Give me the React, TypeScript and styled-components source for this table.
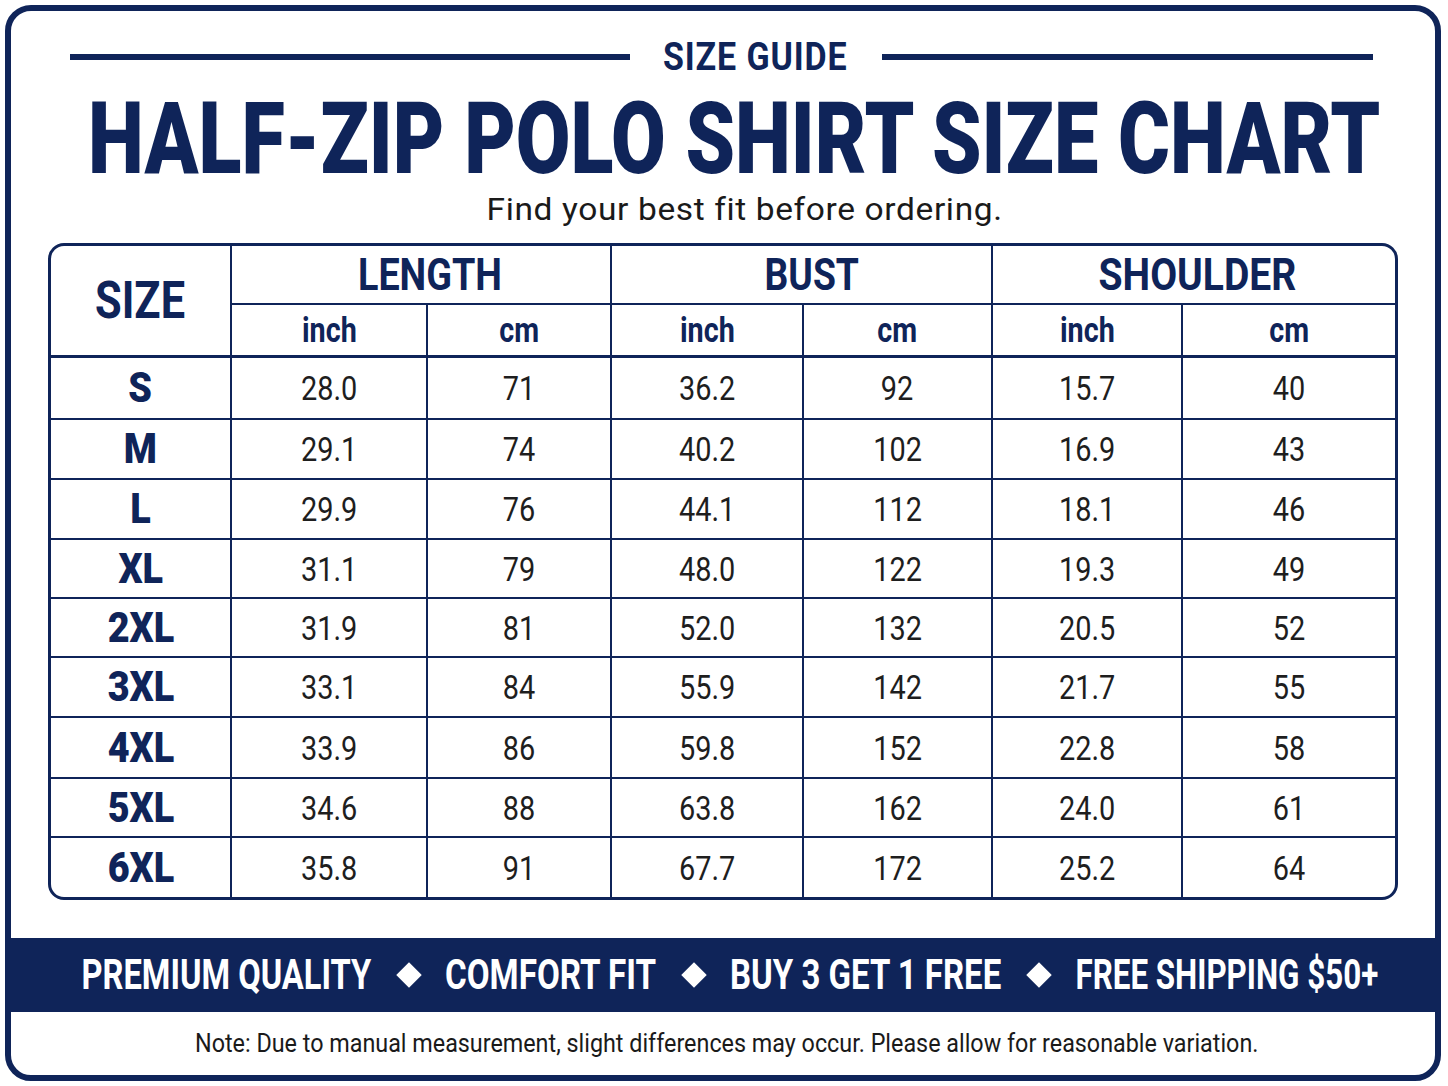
import React, { useLayoutEffect, useRef, useState } from 'react'
import styled, { createGlobalStyle } from 'styled-components'

const NAVY = '#0f2459'
const SANS = 'Roboto, "Liberation Sans", sans-serif'

const GlobalStyle = createGlobalStyle`
  html, body {
    margin: 0;
    padding: 0;
    background: #ffffff;
  }
  body {
    font-family: ${SANS};
  }
`

// squeezes a line of text horizontally so it fills exactly `w` pixels
const FitOuter = styled.span<{ $w: number }>`
  display: inline-flex;
  justify-content: center;
  width: ${(p) => p.$w}px;
  flex-shrink: 0;
  white-space: nowrap;
`

const FitInner = styled.span`
  display: inline-block;
  flex-shrink: 0;
  white-space: nowrap;
  transform-origin: center;
`

const Fit = ({ w, children }: { w: number; children: React.ReactNode }) => {
  const ref = useRef<HTMLSpanElement>(null)
  const [scale, setScale] = useState(1)
  useLayoutEffect(() => {
    const measure = () => {
      if (ref.current && ref.current.offsetWidth) setScale(w / ref.current.offsetWidth)
    }
    measure()
    document.fonts?.ready.then(measure)
  }, [w])
  return (
    <FitOuter $w={w}>
      <FitInner ref={ref} style={{ transform: `scaleX(${scale})` }}>
        {children}
      </FitInner>
    </FitOuter>
  )
}

const Page = styled.div`
  padding: 5px;
  width: 1448px;
  box-sizing: border-box;
`

const Frame = styled.div`
  width: 1436px;
  height: 1076px;
  box-sizing: border-box;
  border: 6px solid ${NAVY};
  border-radius: 26px;
  overflow: hidden;
  display: flex;
  flex-direction: column;
  align-items: center;
  background: #fff;
`

const GuideRow = styled.div`
  margin-top: 26px;
  height: 40px;
  width: 100%;
  display: flex;
  align-items: center;
  padding-left: 59px;
  box-sizing: border-box;
`

const Rule = styled.div<{ $w: number }>`
  width: ${(p) => p.$w}px;
  height: 6px;
  flex-shrink: 0;
  background: ${NAVY};
`

const Guide = styled.div`
  margin: 0 34px 0 33px;
  font-weight: 700;
  font-size: 38px;
  line-height: 40px;
  letter-spacing: 1px;
  color: ${NAVY};
`

const Title = styled.h1`
  margin: 20px 0 0 22px;
  font-weight: 900;
  font-size: 101px;
  line-height: 84px;
  color: ${NAVY};
`

const Subtitle = styled.p`
  margin: 10px 0 0 44px;
  font-size: 32px;
  line-height: 36px;
  letter-spacing: 0.6px;
  color: #1a1a1a;
`

const Table = styled.div`
  margin-top: 16px;
  width: 1350px;
  box-sizing: border-box;
  border: 3px solid ${NAVY};
  border-radius: 16px;
  overflow: hidden;
  display: grid;
  grid-template-columns: 181px 196px 184px 192px 189px 190px 1fr;
  grid-template-rows: 59px 53px 62px 60px 60px 59px 59px 60px 61px 59px 59px;
`

const Cell = styled.div<{ $last?: boolean; $bottom?: number; $col?: string; $row?: string; $shift?: number }>`
  box-sizing: border-box;
  display: flex;
  align-items: center;
  justify-content: center;
  padding-left: ${(p) => p.$shift ?? 0}px;
  border-right: ${(p) => (p.$last ? 'none' : `2px solid ${NAVY}`)};
  border-bottom: ${(p) => (p.$bottom === 0 ? 'none' : `${p.$bottom ?? 2}px solid ${NAVY}`)};
  grid-column: ${(p) => p.$col ?? 'auto'};
  grid-row: ${(p) => p.$row ?? 'auto'};
`

const HeadText = styled.span<{ $size: number }>`
  font-weight: 700;
  font-size: ${(p) => p.$size}px;
  line-height: 1;
  color: ${NAVY};
`

const UnitText = styled.span`
  display: inline-block;
  font-weight: 700;
  font-size: 35px;
  line-height: 1;
  color: ${NAVY};
  transform: scaleX(0.82);
`

const SizeText = styled.span`
  display: inline-block;
  font-weight: 900;
  font-size: 42px;
  line-height: 1;
  color: ${NAVY};
  transform: scaleX(0.9);
`

const Value = styled.span`
  display: inline-block;
  font-weight: 400;
  font-size: 34px;
  line-height: 1;
  color: #1e1e1e;
  transform: scaleX(0.85);
`

const Banner = styled.div`
  margin-top: 38px;
  width: 100%;
  height: 74px;
  flex-shrink: 0;
  background: ${NAVY};
  display: flex;
  align-items: center;
  justify-content: center;
  gap: 25px;
  padding-left: 14px;
  box-sizing: border-box;
`

const Perk = styled.span`
  font-weight: 700;
  font-size: 42px;
  line-height: 1;
  color: #ffffff;
`

const Diamond = styled.span`
  width: 18px;
  height: 18px;
  margin: 0 3px;
  flex-shrink: 0;
  background: #ffffff;
  transform: rotate(45deg);
`

const Note = styled.div`
  flex: 1;
  display: flex;
  align-items: center;
  justify-content: center;
  font-size: 25px;
  color: #1a1a1a;
  padding-left: 7px;
`

const rows: string[][] = [
  ['S', '28.0', '71', '36.2', '92', '15.7', '40'],
  ['M', '29.1', '74', '40.2', '102', '16.9', '43'],
  ['L', '29.9', '76', '44.1', '112', '18.1', '46'],
  ['XL', '31.1', '79', '48.0', '122', '19.3', '49'],
  ['2XL', '31.9', '81', '52.0', '132', '20.5', '52'],
  ['3XL', '33.1', '84', '55.9', '142', '21.7', '55'],
  ['4XL', '33.9', '86', '59.8', '152', '22.8', '58'],
  ['5XL', '34.6', '88', '63.8', '162', '24.0', '61'],
  ['6XL', '35.8', '91', '67.7', '172', '25.2', '64'],
]

const groups = [
  { label: 'LENGTH', col: '2 / span 2', w: 144, shift: 18 },
  { label: 'BUST', col: '4 / span 2', w: 94, shift: 20 },
  { label: 'SHOULDER', col: '6 / span 2', w: 198, shift: 6 },
]

const perks = [
  { text: 'PREMIUM QUALITY', w: 290 },
  { text: 'COMFORT FIT', w: 211 },
  { text: 'BUY 3 GET 1 FREE', w: 271 },
  { text: 'FREE SHIPPING $50+', w: 303 },
]

const App = (): JSX.Element => {
  return (
    <Page>
      <GlobalStyle />
      <Frame>
        <GuideRow>
          <Rule $w={560} />
          <Guide>
            <Fit w={185}>SIZE GUIDE</Fit>
          </Guide>
          <Rule $w={491} />
        </GuideRow>
        <Title>
          <Fit w={1292}>HALF-ZIP POLO SHIRT SIZE CHART</Fit>
        </Title>
        <Subtitle>
          <Fit w={516}>Find your best fit before ordering.</Fit>
        </Subtitle>

        <Table>
          <Cell $col="1" $row="1 / span 2" $bottom={3}>
            <HeadText $size={52}>
              <Fit w={90}>SIZE</Fit>
            </HeadText>
          </Cell>
          {groups.map((g, i) => (
            <Cell key={g.label} $col={g.col} $row="1" $shift={g.shift} $last={i === groups.length - 1}>
              <HeadText $size={44}>
                <Fit w={g.w}>{g.label}</Fit>
              </HeadText>
            </Cell>
          ))}
          {['inch', 'cm', 'inch', 'cm', 'inch', 'cm'].map((u, i) => (
            <Cell key={i} $row="2" $bottom={3} $last={i === 5}>
              <UnitText>{u}</UnitText>
            </Cell>
          ))}
          {rows.map((r, ri) =>
            r.map((v, ci) => (
              <Cell key={`${ri}-${ci}`} $last={ci === 6} $bottom={ri === rows.length - 1 ? 0 : 2}>
                {ci === 0 ? <SizeText>{v}</SizeText> : <Value>{v}</Value>}
              </Cell>
            )),
          )}
        </Table>

        <Banner>
          {perks.map((p, i) => (
            <React.Fragment key={p.text}>
              {i > 0 && <Diamond />}
              <Perk>
                <Fit w={p.w}>{p.text}</Fit>
              </Perk>
            </React.Fragment>
          ))}
        </Banner>
        <Note>
          <Fit w={1063}>
            Note: Due to manual measurement, slight differences may occur. Please allow for reasonable variation.
          </Fit>
        </Note>
      </Frame>
    </Page>
  )
}

export default App
